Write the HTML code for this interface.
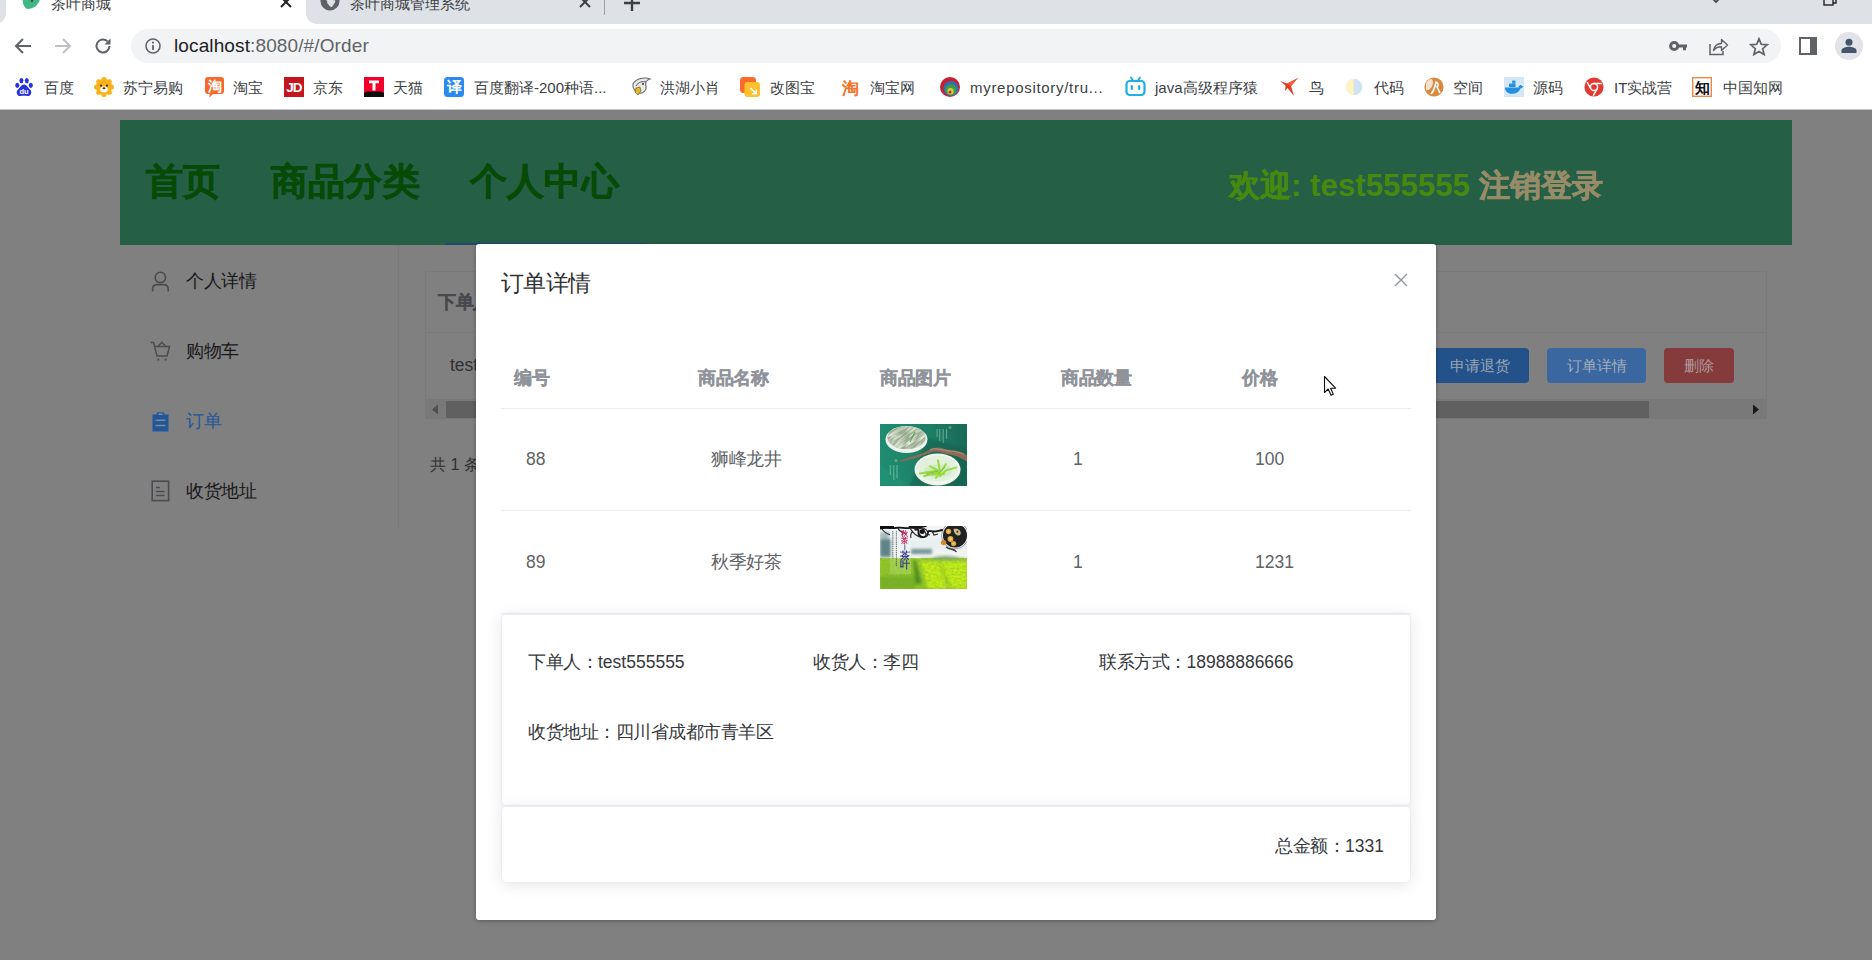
<!DOCTYPE html>
<html lang="zh">
<head>
<meta charset="utf-8">
<title>茶叶商城</title>
<style>
*{box-sizing:border-box;margin:0;padding:0}
html,body{width:1872px;height:960px;overflow:hidden;background:#808080;font-family:"Liberation Sans",sans-serif;}
#root{position:relative;width:1872px;height:960px;overflow:hidden;background:#808080}
.abs{position:absolute;white-space:nowrap}
.cj{letter-spacing:-.5px}
/* chrome */
#tabstrip{left:0;top:0;width:1872px;height:24px;background:#dee1e6}
#toolbar{left:0;top:24px;width:1872px;height:44px;background:#fff}
#bookbar{left:0;top:68px;width:1872px;height:42px;background:#fff;border-bottom:1px solid #c4c5c7}
#omni{left:131px;top:29px;width:1650px;height:34px;border-radius:17px;background:#f1f3f4}
.bm{font-size:15px;color:#3c4043;top:78px;line-height:20px}
/* page */
#hdr{left:120px;top:120px;width:1672px;height:125px;background:#245f46}
.nav{font-size:37px;font-weight:bold;color:#064a06;top:160px;line-height:44px;-webkit-text-stroke:.6px #064a06;letter-spacing:.2px}
.menu{font-size:17.5px;color:#181819;line-height:22px;letter-spacing:-.5px}
/* dialog */
#dlg{left:476px;top:244px;width:960px;height:676px;background:#fff;border-radius:3px;box-shadow:0 1px 4px rgba(0,0,0,.3)}
.th{font-size:17.5px;font-weight:bold;color:#909399;top:367px;line-height:22px;-webkit-text-stroke:.3px #909399;letter-spacing:-.4px}
.td{font-size:17.5px;color:#606266;line-height:22px}
.card{background:#fff;border:1px solid #ebeef5;border-radius:5px;box-shadow:0 2px 15px rgba(0,0,0,.1)}
.ct{font-size:17.5px;color:#36383c;line-height:22px}
</style>
</head>
<body>
<div id="root">
<!-- PAGE BACKGROUND (dimmed) -->
<div class="abs" id="hdr"></div>
<div class="abs" style="left:445px;top:242px;width:200px;height:1px;background:#235a55"></div><div class="abs" style="left:445px;top:243px;width:200px;height:2px;background:#214c68"></div>
<div class="abs nav" style="left:146px">首页</div>
<div class="abs nav" style="left:271px">商品分类</div>
<div class="abs nav" style="left:470px">个人中心</div>
<div class="abs" style="left:1229px;top:166px;font-size:31.25px;font-weight:bold;line-height:40px;color:#47890f"><span style="-webkit-text-stroke:.5px #47890f">欢迎</span>: test555555 <span style="color:#988c68;-webkit-text-stroke:.5px #988c68">注销登录</span></div>
<!-- sidebar -->
<div class="abs" style="left:398px;top:245px;width:1px;height:283px;background:#78797c"></div>
<svg class="abs" style="left:150px;top:270px" width="22" height="23" viewBox="0 0 22 23"><circle cx="10.4" cy="7.4" r="5.2" fill="none" stroke="#4a4b4f" stroke-width="1.6"/><path d="M2.6 21.5 V19 C2.6 16 5 14.6 7.5 14.6 H13.3 C15.8 14.6 18.2 16 18.2 19 V21.5" fill="none" stroke="#4a4b4f" stroke-width="1.6"/></svg>
<div class="abs menu" style="left:186px;top:270px">个人详情</div>
<svg class="abs" style="left:149px;top:340px" width="23" height="23" viewBox="0 0 23 23"><path d="M1.5 2.5 H4.5 L8 16 H18 L20.5 6.5 H5.8" fill="none" stroke="#4a4b4f" stroke-width="1.5" stroke-linejoin="round"/><path d="M9 6.5 L12.8 2.2 L16.8 6.5" fill="none" stroke="#4a4b4f" stroke-width="1.4"/><circle cx="9.3" cy="19.6" r="1.1" fill="#4a4b4f"/><circle cx="16.6" cy="19.6" r="1.1" fill="#4a4b4f"/></svg>
<div class="abs menu" style="left:186px;top:340px">购物车</div>
<svg class="abs" style="left:152px;top:411px" width="17" height="21" viewBox="0 0 17 21"><path d="M0.5 3.5 H4.8 V1.2 H12.2 V3.5 H16.5 V20.5 H0.5Z" fill="#21569a"/><path d="M3.5 9.2 H13.5 M3.5 14.6 H13.5" stroke="#7f8890" stroke-width="1.5"/><rect x="6.3" y="2.4" width="4.4" height="1.6" fill="#7f8890"/></svg>
<div class="abs menu" style="left:186px;top:410px;color:#24559a">订单</div>
<svg class="abs" style="left:151px;top:480px" width="19" height="22" viewBox="0 0 19 22"><rect x="1.2" y="1.2" width="16.4" height="19.4" fill="none" stroke="#4a4b4f" stroke-width="1.6"/><path d="M5 7.6 H9 M5 11.6 H13.6 M5 15.6 H13.6" stroke="#4a4b4f" stroke-width="1.5"/></svg>
<div class="abs menu" style="left:186px;top:480px">收货地址</div>
<!-- main table -->
<div class="abs" style="left:425px;top:271px;width:1342px;height:129px;border:1px solid #797a7d;border-bottom:none"></div>
<div class="abs" style="left:425px;top:332px;width:1342px;height:1px;background:#797a7d"></div>
<div class="abs" style="left:438px;top:291px;font-size:17.5px;font-weight:bold;line-height:22px;color:#48494d;-webkit-text-stroke:.3px #48494d;letter-spacing:-.4px">下单人</div>
<div class="abs" style="left:450px;top:354px;font-size:17.5px;line-height:22px;color:#303133">test555555</div>
<div class="abs" style="left:1431px;top:348px;width:98px;height:35px;border-radius:4px;background:#23528a"></div>
<div class="abs" style="left:1450px;top:356px;font-size:15px;line-height:19px;color:#9aa5b3">申请退货</div>
<div class="abs" style="left:1547px;top:348px;width:99px;height:35px;border-radius:4px;background:#3a67a0"></div>
<div class="abs" style="left:1567px;top:356px;font-size:15px;line-height:19px;color:#a3aebb">订单详情</div>
<div class="abs" style="left:1664px;top:348px;width:70px;height:35px;border-radius:4px;background:#853a3c"></div>
<div class="abs" style="left:1684px;top:356px;font-size:15px;line-height:19px;color:#b19a9b">删除</div>
<div class="abs" style="left:425px;top:399px;width:1342px;height:20px;background:#797979"></div>
<div class="abs" style="left:446px;top:401px;width:1203px;height:17px;background:#606060"></div>
<svg class="abs" style="left:430px;top:403px" width="10" height="13" viewBox="0 0 10 13"><path d="M8 1.5 V11.5 L2 6.5Z" fill="#505050"/></svg>
<svg class="abs" style="left:1751px;top:403px" width="10" height="13" viewBox="0 0 10 13"><path d="M2 1.5 V11.5 L8 6.5Z" fill="#1a1a1a"/></svg>
<div class="abs" style="left:430px;top:454px;font-size:16.25px;line-height:21px;color:#303133">共 1 条</div>
<!-- DIALOG -->
<div class="abs" id="dlg"></div>
<div class="abs" style="left:501px;top:269px;font-size:22.5px;line-height:30px;color:#303133;letter-spacing:-.7px">订单详情</div>
<svg class="abs" style="left:1393px;top:272px" width="16" height="16" viewBox="0 0 16 16"><path d="M2 2 L14 14 M14 2 L2 14" stroke="#909399" stroke-width="1.4" fill="none"/></svg>
<div class="abs th" style="left:514px">编号</div>
<div class="abs th" style="left:698px">商品名称</div>
<div class="abs th" style="left:880px">商品图片</div>
<div class="abs th" style="left:1061px">商品数量</div>
<div class="abs th" style="left:1242px">价格</div>
<div class="abs" style="left:501px;top:408px;width:910px;height:1px;background:#ebeef5"></div>
<div class="abs" style="left:501px;top:510px;width:910px;height:1px;background:#ebeef5"></div>
<div class="abs" style="left:501px;top:613px;width:910px;height:1px;background:#ebeef5"></div>
<div class="abs td" style="left:526px;top:448px">88</div>
<div class="abs td" style="left:711px;top:448px"><span class="cj">狮峰龙井</span></div>
<div class="abs td" style="left:1073px;top:448px">1</div>
<div class="abs td" style="left:1255px;top:448px">100</div>
<div class="abs td" style="left:526px;top:551px">89</div>
<div class="abs td" style="left:711px;top:551px"><span class="cj">秋季好茶</span></div>
<div class="abs td" style="left:1073px;top:551px">1</div>
<div class="abs td" style="left:1255px;top:551px">1231</div>
<svg class="abs" style="left:880px;top:424px" width="87" height="62" viewBox="0 0 87 62">
<defs><filter id="b1" x="-10%" y="-10%" width="120%" height="120%"><feGaussianBlur stdDeviation=".5"/></filter><filter id="b2" x="-10%" y="-10%" width="120%" height="120%"><feGaussianBlur stdDeviation=".9"/></filter>
<filter id="t1" x="0" y="0" width="100%" height="100%"><feTurbulence type="fractalNoise" baseFrequency=".09 .6" numOctaves="2" seed="7"/><feColorMatrix type="matrix" values="0 0 0 0 .28  0 0 0 0 .40  0 0 0 0 .26  0 2.2 0 0 -.75"/></filter>
<filter id="t2" x="0" y="0" width="100%" height="100%"><feTurbulence type="fractalNoise" baseFrequency=".09 .6" numOctaves="2" seed="11"/><feColorMatrix type="matrix" values="0 0 0 0 .90  0 0 0 0 .94  0 0 0 0 .86  2.2 0 0 0 -.8"/></filter>
<linearGradient id="g1" x1="0" y1="0" x2="1" y2="0"><stop offset="0" stop-color="#1f8d70"/><stop offset=".55" stop-color="#1d7f66"/><stop offset="1" stop-color="#196a56"/></linearGradient>
<clipPath id="c1"><rect width="87" height="62"/></clipPath>
<clipPath id="cp"><ellipse cx="26.5" cy="13.6" rx="19" ry="11.4"/></clipPath></defs>
<g clip-path="url(#c1)">
<rect width="87" height="62" fill="url(#g1)"/>
<path d="M46 14 L87 24 V62 H30 Z" fill="#16604d" opacity=".55" filter="url(#b2)"/>
<path d="M0 40 L30 62 H0Z" fill="#23977a" opacity=".5" filter="url(#b2)"/>
<g filter="url(#b1)">
<ellipse cx="26.5" cy="15.5" rx="21" ry="13.6" fill="#eef3ee"/>
<ellipse cx="26.5" cy="13.6" rx="19" ry="11.4" fill="#9fb095"/>
<g clip-path="url(#cp)"><g transform="rotate(-38 26 14)"><rect x="-5" y="-12" width="64" height="52" filter="url(#t1)"/><rect x="-5" y="-12" width="64" height="52" filter="url(#t2)"/></g></g>
<path d="M30 18 L35 8" stroke="#4f9a4a" stroke-width="1.4" opacity=".7"/>
<path d="M20.5 36.4 C30 33 38 31.4 44 28.6 C49 26 53 23.4 58 23.6 C64 24 68 26.6 74 26.6 C80 27 84 29.4 87 31.6 V37.6 C82 34.6 78 32 72 31 C65 30.4 60 27.4 55 27.6 C50 28 44 32 36 34 C30 35.6 25 36.8 21 37.6Z" fill="#906a57"/>
<path d="M50 25.6 C56 23.4 62 26.6 70 27 C76 27.4 80 28.6 84 30.4" stroke="#b89483" stroke-width=".9" fill="none"/>
<ellipse cx="57.5" cy="45.5" rx="23" ry="16" fill="#f0f6ee"/>
<ellipse cx="57.5" cy="44.4" rx="20.4" ry="13" fill="#e2f1dc"/>
<ellipse cx="58" cy="47" rx="14" ry="7" fill="#cfeabf" opacity=".8"/>
<path d="M40 49.4 L58 46.4 L50 42.4 M44 52 L60 48 L58 36.4 M56 54 L62 46 L66 40 M60 52 L66 46.4 L76 43.6 M52 50.6 L64 50" stroke="#9ad943" stroke-width="2" fill="none" stroke-linecap="round" stroke-linejoin="round"/>
<path d="M46 50 L58 47 M58 50 L65 43" stroke="#76bb2e" stroke-width=".9" fill="none"/>
</g>
<g fill="#a9d8bf" opacity=".5" filter="url(#b1)"><circle cx="70" cy="3.6" r="1.5" fill="#c9b46a"/><rect x="66" y="5" width="1.1" height="10"/><rect x="62.6" y="5" width="1.1" height="14"/><rect x="59.2" y="5" width="1.1" height="12"/><rect x="56.6" y="5" width="1" height="8"/>
<circle cx="16" cy="36.5" r="1.5" fill="#c9b46a"/><rect x="16.5" y="41" width="1.1" height="13"/><rect x="13.2" y="41" width="1.1" height="15"/><rect x="9.8" y="41" width="1.1" height="10"/></g>
</g></svg>
<svg class="abs" style="left:880px;top:526px" width="87" height="63" viewBox="0 0 87 63">
<defs><filter id="d1" x="-10%" y="-10%" width="120%" height="120%"><feGaussianBlur stdDeviation=".45"/></filter><filter id="d2" x="-20%" y="-20%" width="140%" height="140%"><feGaussianBlur stdDeviation="1.6"/></filter>
<filter id="tx" x="0" y="0" width="100%" height="100%"><feTurbulence type="fractalNoise" baseFrequency=".35 .5" numOctaves="2" seed="4"/><feColorMatrix type="matrix" values="0 0 0 0 .15  0 0 0 0 .38  0 0 0 0 .05  0 1.6 0 0 -.55"/></filter>
<linearGradient id="sk" x1="0" y1="0" x2="0" y2="1"><stop offset="0" stop-color="#f2f5f5"/><stop offset=".3" stop-color="#e9eeee"/><stop offset=".5" stop-color="#f4f7f4"/><stop offset=".52" stop-color="#a2d02a"/><stop offset="1" stop-color="#90c41e"/></linearGradient>
<clipPath id="c2"><rect width="87" height="63"/></clipPath></defs>
<g clip-path="url(#c2)">
<rect width="87" height="63" fill="url(#sk)"/>
<g filter="url(#d2)">
<path d="M0 13 H11 V31 H0Z" fill="#5f8388"/>
<path d="M0 6 H9 V13 H0Z" fill="#a9bcbe"/>
<path d="M31 23 H52 V28 H31Z" fill="#6f9295"/>
<path d="M50 33 C58 29 72 29 84 33Z" fill="#7f9c86"/>
<path d="M40 33 H87 V63 H48Z" fill="#c4ee12"/>
<path d="M0 33 H34 L40 63 H0Z" fill="#93c828"/>
<path d="M0 50 H36 V63 H0Z" fill="#7ab322"/>
<path d="M33 34 L36 34 L42 58 L35 58Z" fill="#4f8c1c"/>
<path d="M58 34 L60 34 L73 63 L67 63Z" fill="#a6d61c"/>
<path d="M40 32.5 H87 V35 H40Z" fill="#86b83a"/>
</g>
<rect x="0" y="32" width="87" height="31" filter="url(#tx)" opacity=".55"/>
<rect x="10" y="3" width="21" height="45" fill="#fff" opacity=".16"/>
<g filter="url(#d1)">
<path d="M0 1 C5 0 9 3 15 2 C21 .6 25 3 30 1.8 C35 .8 39 2.5 38.5 6 C38 10.5 43 12.5 46.5 10 C49.5 7.5 46 4 51 5.2 C55 6.2 58 4.6 63 4" stroke="#141414" stroke-width="1.9" fill="none"/>
<path d="M0 0 H14 V1.8 C9 3.4 4 2.4 0 3.6Z" fill="#101010"/>
<path d="M28 0 H47 C46 2 42 1.2 39 2.6 C35 3.4 31 2.6 28 0Z" fill="#181818"/>
<path d="M30 2 C32 6 36 10 42 11.8 M39 2.6 C43 1.6 47 3 47.6 6.2 M2 3 C4 6 7 8 10 8.6 M18 2 C19 5 21 6 24 6 M33 5 C31 7 30 9 31 12 M43 2 L46 8 L50 9 M52 5 L54 9 L58 8" stroke="#222" stroke-width="1.1" fill="none"/>
<circle cx="42.2" cy="5.6" r="2.5" fill="#191919"/><circle cx="35.8" cy="3.4" r="1.4" fill="#222"/><circle cx="46" cy="9.4" r="1.2" fill="#333"/>
<circle cx="75" cy="9.5" r="12" fill="#232323"/>
<circle cx="75" cy="9.5" r="13.4" fill="none" stroke="#555" stroke-width="1" opacity=".5"/>
<path d="M66 21 C70 24.5 74 22 76.5 26" stroke="#3a3a3a" stroke-width="1.3" fill="none"/>
<circle cx="68.5" cy="5.5" r="2.7" fill="#d9a23e"/><circle cx="70.5" cy="13" r="2.9" fill="#e2aa3c"/><circle cx="73.6" cy="17.6" r="2.6" fill="#d9a23e"/><circle cx="63.6" cy="16.6" r="2.7" fill="#c98f2e"/>
<circle cx="68.5" cy="5.5" r="1.3" fill="#f0cd78"/><circle cx="70.5" cy="13" r="1.4" fill="#f3d27e"/><circle cx="73.6" cy="17.6" r="1.2" fill="#f0cd78"/>
<path d="M73.6 3 C77.6 1.6 82 4.6 80.4 8.6 C78.6 11 73.6 8.4 73.6 3Z" fill="#cdbd8e"/>
<circle cx="77.4" cy="5.8" r="1" fill="#3a3326"/>
<text x="24.8" y="9.6" font-family="Liberation Sans" font-size="7.4" font-weight="bold" fill="#c3205c" text-anchor="middle">秋</text>
<text x="24.8" y="16.8" font-family="Liberation Sans" font-size="7.4" font-weight="bold" fill="#c3205c" text-anchor="middle">茶</text>
<rect x="24.3" y="18.4" width="1" height="6" fill="#5a5f9a"/>
<text x="24.8" y="33" font-family="Liberation Serif" font-size="9.6" font-weight="bold" fill="#3b3f8e" text-anchor="middle">茶</text>
<text x="24.8" y="42" font-family="Liberation Serif" font-size="9.6" font-weight="bold" fill="#3b3f8e" text-anchor="middle">叶</text>
<g fill="#4e5f60" opacity=".75"><path d="M16.4 5 V41 M12.8 5 V33" stroke="#4e5f60" stroke-width="1.2" stroke-dasharray="1.4 .7"/></g>
</g>
</g></svg>
<div class="abs card" style="left:501px;top:614px;width:910px;height:192px"></div>
<div class="abs ct" style="left:528px;top:651px"><span class="cj">下单人：</span>test555555</div>
<div class="abs ct" style="left:813px;top:651px"><span class="cj">收货人：李四</span></div>
<div class="abs ct" style="left:1099px;top:651px"><span class="cj">联系方式：</span>18988886666</div>
<div class="abs ct" style="left:528px;top:721px"><span class="cj">收货地址：四川省成都市青羊区</span></div>
<div class="abs card" style="left:501px;top:806px;width:910px;height:77px"></div>
<div class="abs ct" style="right:488px;top:835px"><span class="cj">总金额：</span>1331</div>
<!-- cursor -->
<svg class="abs" style="left:1323px;top:375px" width="14" height="22" viewBox="0 0 14 22"><path d="M1.5 1.5 V17.5 L5.2 14 L8 20.3 L10.3 19.3 L7.6 13.2 H12.6Z" fill="#fff" stroke="#111" stroke-width="1.1" stroke-linejoin="round"/></svg>
<!-- BROWSER CHROME -->
<div class="abs" id="tabstrip"></div>
<div class="abs" style="left:6px;top:-10px;width:300px;height:34px;background:#fff;border-radius:10px 10px 0 0"></div>
<div class="abs" style="left:-4px;top:14px;width:10px;height:10px;background:radial-gradient(circle at 0 0,#dee1e6 9.5px,#fff 10px)"></div>
<div class="abs" style="left:306px;top:14px;width:10px;height:10px;background:radial-gradient(circle at 100% 0,#dee1e6 9.5px,#fff 10px)"></div>
<svg class="abs" style="left:22px;top:-11px" width="20" height="20" viewBox="0 0 20 20"><path d="M1 6 C4 2 14 0 19 3 C19 12 15 20 5 20 C1 18 0 12 1 6Z" fill="#41b883"/><path d="M6 6 L10 14 L14 6 L12 6 L10 10.5 L8 6Z" fill="#35495e"/></svg>
<div class="abs" style="left:51px;top:-6px;font-size:15px;line-height:20px;color:#3c4043">茶叶商城</div>
<svg class="abs" style="left:279px;top:-5px" width="14" height="14" viewBox="0 0 14 14"><path d="M2 2 L12 12 M12 2 L2 12" stroke="#202124" stroke-width="2" fill="none"/></svg>
<svg class="abs" style="left:320px;top:-9.5px" width="20" height="20" viewBox="0 0 20 20"><circle cx="10" cy="10" r="9.5" fill="#5f6368"/><path d="M3 9 C6 8 8 10 7 12 C9 13 9 16 12 16 C13 13 16 12 15 9 C12 10 11 7 13 5 L9 3 C8 6 5 6 3 9Z" fill="#dee1e6"/></svg>
<div class="abs" style="left:350px;top:-6px;font-size:15px;line-height:20px;color:#3c4043">茶叶商城管理系统</div>
<svg class="abs" style="left:578px;top:-5px" width="14" height="14" viewBox="0 0 14 14"><path d="M2 2 L12 12 M12 2 L2 12" stroke="#3c4043" stroke-width="2" fill="none"/></svg>
<div class="abs" style="left:604px;top:0;width:1px;height:15px;background:#9aa0a6"></div>
<svg class="abs" style="left:623px;top:-6px" width="18" height="18" viewBox="0 0 18 18"><path d="M9 1 V17 M1 9 H17" stroke="#3c4043" stroke-width="2.4" fill="none"/></svg>
<svg class="abs" style="left:1710px;top:-4px" width="12" height="8" viewBox="0 0 12 8"><path d="M1 1 L6 6 L11 1" stroke="#3c4043" stroke-width="1.6" fill="none"/></svg>
<svg class="abs" style="left:1823px;top:-6px" width="14" height="12" viewBox="0 0 14 12"><rect x="1" y="2" width="9" height="9" fill="none" stroke="#202124" stroke-width="1.4"/><path d="M4 2 V0 H13 V9 H10" fill="none" stroke="#202124" stroke-width="1.4"/></svg>
<div class="abs" id="toolbar"></div>
<div class="abs" id="omni"></div>
<svg class="abs" style="left:13px;top:36px" width="20" height="20" viewBox="0 0 20 20"><path d="M18 10 H3.5 M10 3 L3 10 L10 17" stroke="#5f6368" stroke-width="2" fill="none"/></svg>
<svg class="abs" style="left:53px;top:36px" width="20" height="20" viewBox="0 0 20 20"><path d="M2 10 H16.5 M10 3 L17 10 L10 17" stroke="#bdc1c6" stroke-width="2" fill="none"/></svg>
<svg class="abs" style="left:93px;top:36px" width="20" height="20" viewBox="0 0 20 20"><path d="M16.5 10 A6.5 6.5 0 1 1 14.6 5.4" stroke="#5f6368" stroke-width="2" fill="none"/><path d="M17.5 2.5 V8.5 H11.5Z" fill="#5f6368"/></svg>
<svg class="abs" style="left:144px;top:37px" width="18" height="18" viewBox="0 0 18 18"><circle cx="9" cy="9" r="7" stroke="#5f6368" stroke-width="1.6" fill="none"/><path d="M9 8 V13" stroke="#5f6368" stroke-width="1.8"/><circle cx="9" cy="5.6" r="1.1" fill="#5f6368"/></svg>
<div class="abs" style="left:174px;top:34px;font-size:19px;line-height:24px;color:#202124;letter-spacing:0.12px">localhost<span style="color:#5f6368">:8080/#/Order</span></div>
<div class="abs" id="bookbar"></div>
<!-- toolbar right icons -->
<svg class="abs" style="left:1669px;top:37px" width="19" height="18" viewBox="0 0 19 18"><circle cx="5.2" cy="9" r="3.6" stroke="#5f6368" stroke-width="3" fill="none"/><path d="M9 9 H18 M15.5 9 V13.2" stroke="#5f6368" stroke-width="3" fill="none"/></svg>
<svg class="abs" style="left:1709px;top:37px" width="20" height="19" viewBox="0 0 20 19"><path d="M1 7 V17.5 H14 V14" stroke="#5f6368" stroke-width="1.5" fill="none"/><path d="M4.5 13.5 C5.5 8.5 9 6.5 12.5 6.5 V2.5 L18.5 8 L12.5 13.5 V9.8 C9 9.8 6.5 10.8 4.5 13.5Z" stroke="#5f6368" stroke-width="1.4" fill="none" stroke-linejoin="round"/></svg>
<svg class="abs" style="left:1749px;top:37px" width="20" height="19" viewBox="0 0 20 19"><path d="M10 1.8 L12.3 7.3 L18.2 7.8 L13.7 11.7 L15.1 17.5 L10 14.4 L4.9 17.5 L6.3 11.7 L1.8 7.8 L7.7 7.3Z" stroke="#5f6368" stroke-width="1.7" fill="none" stroke-linejoin="miter"/></svg>
<svg class="abs" style="left:1799px;top:37px" width="18" height="18" viewBox="0 0 18 18"><rect x="1" y="1" width="16" height="16" fill="none" stroke="#5f6368" stroke-width="2"/><rect x="11" y="1" width="6" height="16" fill="#5f6368"/></svg>
<div class="abs" style="left:1835px;top:32px;width:28px;height:28px;border-radius:14px;background:#e1e3e8"></div>
<svg class="abs" style="left:1840px;top:37px" width="18" height="18" viewBox="0 0 18 18"><circle cx="9" cy="5.3" r="3.5" fill="#44546a"/><path d="M1.5 16 V13.5 C1.5 11 6 9.8 9 9.8 C12 9.8 16.5 11 16.5 13.5 V16Z" fill="#44546a"/></svg>
<!-- bookmark favicons -->
<svg class="abs" style="left:14px;top:77px" width="20" height="20" viewBox="0 0 20 20"><g fill="#2932e1"><ellipse cx="3.3" cy="8.3" rx="2" ry="2.6"/><ellipse cx="7.4" cy="3.6" rx="2" ry="2.7"/><ellipse cx="12.8" cy="3.6" rx="2" ry="2.7"/><ellipse cx="16.8" cy="8.3" rx="2" ry="2.6"/><path d="M10 7.5 C13 7.5 14 11 16.5 13 C18.5 15.5 16.5 19.5 13.5 19 C11.5 18.6 8.5 18.6 6.5 19 C3.5 19.5 1.5 15.5 3.5 13 C6 11 7 7.5 10 7.5Z"/></g><text x="10" y="17.2" font-family="Liberation Sans" font-size="7.5" font-weight="bold" fill="#fff" text-anchor="middle">du</text></svg>
<svg class="abs" style="left:94px;top:77px" width="20" height="20" viewBox="0 0 20 20"><g fill="#f9b21a"><circle cx="10" cy="10" r="8"/><circle cx="10" cy="2.6" r="2.6"/><circle cx="15.2" cy="4.8" r="2.6"/><circle cx="17.4" cy="10" r="2.6"/><circle cx="15.2" cy="15.2" r="2.6"/><circle cx="10" cy="17.4" r="2.6"/><circle cx="4.8" cy="15.2" r="2.6"/><circle cx="2.6" cy="10" r="2.6"/><circle cx="4.8" cy="4.8" r="2.6"/></g><ellipse cx="10" cy="12.6" rx="3.8" ry="3" fill="#fff"/><circle cx="7" cy="8.6" r="1.1" fill="#4a2c0a"/><circle cx="13" cy="8.6" r="1.1" fill="#4a2c0a"/><ellipse cx="10" cy="11.3" rx="1.5" ry="1" fill="#4a2c0a"/></svg>
<svg class="abs" style="left:204px;top:76px" width="21" height="22" viewBox="0 0 21 22"><path d="M4 1 H17 Q20 1 20 4 V15 Q20 18 17 18 H9 L5.5 21.5 L5.5 18 H4 Q1 18 1 15 V4 Q1 1 4 1Z" fill="#f5692c"/><text x="10.5" y="14.6" font-family="Liberation Sans" font-size="14" font-weight="bold" fill="#fff" text-anchor="middle">淘</text></svg>
<svg class="abs" style="left:284px;top:77px" width="20" height="20" viewBox="0 0 20 20"><rect width="20" height="20" fill="#c4161f"/><text x="10" y="15.2" font-family="Liberation Sans" font-size="13.5" font-weight="bold" fill="#fff" text-anchor="middle" letter-spacing="-0.8">JD</text></svg>
<svg class="abs" style="left:364px;top:77px" width="20" height="20" viewBox="0 0 20 20"><rect width="20" height="20" fill="#f2002b"/><path d="M0 16 L3 14.5 H17 L20 16 V20 H0Z" fill="#0d0d0d"/><path d="M5 3.5 H15 V6.3 H11.5 V13.5 H8.5 V6.3 H5Z" fill="#fff"/></svg>
<svg class="abs" style="left:444px;top:77px" width="20" height="20" viewBox="0 0 20 20"><rect width="20" height="20" rx="3.5" fill="#2a8af0"/><text x="10" y="15.3" font-family="Liberation Sans" font-size="14.5" font-weight="bold" fill="#fff" text-anchor="middle">译</text></svg>
<svg class="abs" style="left:630px;top:76px" width="22" height="22" viewBox="0 0 22 22"><path d="M3 8 C6 2 15 1 20 3 C16 4 15 7 16 10 C17 14 13 18 9 17 C6 16 2 13 3 8Z" fill="#e9e9e9" stroke="#6b6b6b" stroke-width="1.1"/><path d="M6 10 C8 6 13 5 16 6" stroke="#555" stroke-width="1" fill="none"/><path d="M6 12 L10 11 L11 15 L8 19 L5 16Z" fill="#e8b72c" stroke="#6a5a20" stroke-width=".7"/><circle cx="13" cy="8" r="1" fill="#333"/></svg>
<svg class="abs" style="left:740px;top:77px" width="20" height="20" viewBox="0 0 20 20"><rect x="0" y="0" width="16" height="16" rx="3.5" fill="#fb6a2c"/><rect x="4.5" y="5" width="15.5" height="15" rx="3" fill="#fdc12e"/><path d="M10.5 11 L16 16.5 M16.3 12.5 V16.8 H12" stroke="#fff" stroke-width="1.5" fill="none"/></svg>
<svg class="abs" style="left:839px;top:76px" width="22" height="22" viewBox="0 0 22 22"><text x="11" y="17.5" font-family="Liberation Sans" font-size="17" font-weight="bold" fill="#f4732a" text-anchor="middle">淘</text></svg>
<svg class="abs" style="left:940px;top:77px" width="20" height="20" viewBox="0 0 20 20"><circle cx="10" cy="10" r="10" fill="#c8202f"/><circle cx="11" cy="11.5" r="7.6" fill="#2f6fb5"/><circle cx="11" cy="12.8" r="5.6" fill="#3c9e46"/><circle cx="10.5" cy="14.2" r="3.2" fill="#d9c83a"/><circle cx="10" cy="15" r="1.5" fill="#c8202f"/></svg>
<svg class="abs" style="left:1125px;top:76px" width="21" height="21" viewBox="0 0 21 21"><path d="M6 1.5 L8.5 5 M15 1.5 L12.5 5" stroke="#20aee5" stroke-width="2" stroke-linecap="round"/><rect x="1.5" y="5" width="18" height="14" rx="3.2" fill="#fff" stroke="#20aee5" stroke-width="2.2"/><path d="M6.8 10 V13 M14.2 10 V13" stroke="#20aee5" stroke-width="2.2" stroke-linecap="round"/></svg>
<svg class="abs" style="left:1279px;top:77px" width="21" height="20" viewBox="0 0 21 20"><path d="M1 4 L8 6.5 L19 1 L12 9 L15 19 L8.5 11 L6 14 L6.5 8.5Z" fill="#e03c24"/><path d="M8 6.5 L19 1 L12 9 Z" fill="#f0603a"/></svg>
<svg class="abs" style="left:1345px;top:78px" width="18" height="18" viewBox="0 0 18 18"><circle cx="9" cy="9" r="8.3" fill="#fdf3c4"/><path d="M9 .7 A8.3 8.3 0 0 1 9 17.3Z" fill="#cfe3f7"/><path d="M9 1 V17" stroke="#e9e2c6" stroke-width="1"/></svg>
<svg class="abs" style="left:1424px;top:77px" width="20" height="20" viewBox="0 0 20 20"><circle cx="10" cy="10" r="9.6" fill="#d98a3f"/><path d="M2 6 C5 1 9 1 9 5 C9 11 4 14 2 13Z" fill="#f2e3d0"/><path d="M11 5 C14 5 15 8 13 10 L16 16 M12 5 C11 10 10 14 7 17" stroke="#fff" stroke-width="1.6" fill="none"/></svg>
<svg class="abs" style="left:1504px;top:77px" width="20" height="20" viewBox="0 0 20 20"><rect width="20" height="20" fill="#d3e7f6"/><path d="M1 10.5 H14.5 C15 8.5 16 8 17 8 C17.3 9 18.6 9 19.4 9.6 C18.6 11 17.4 11.4 16.4 11.4 C15.2 15 12 16.8 8 16.8 C3.6 16.8 1 14 1 10.5Z" fill="#2390e0"/><rect x="5" y="6.6" width="6.5" height="3.4" fill="#2390e0"/><rect x="8.2" y="3.6" width="3.2" height="3" fill="#2390e0"/></svg>
<svg class="abs" style="left:1584px;top:77px" width="20" height="20" viewBox="0 0 20 20"><circle cx="10" cy="10" r="9.6" fill="#e23a30"/><circle cx="10" cy="10" r="3.6" fill="none" stroke="#fff" stroke-width="1.5"/><path d="M10 6.4 H17.8 M6.9 11.8 L3 5 M13.1 11.8 L9.2 18.6" stroke="#fff" stroke-width="1.5" fill="none"/></svg>
<svg class="abs" style="left:1692px;top:77px" width="20" height="20" viewBox="0 0 20 20"><rect x=".7" y=".7" width="18.6" height="18.6" fill="#fff" stroke="#e98a4a" stroke-width="1.4"/><text x="10" y="15.6" font-family="Liberation Serif" font-size="15" font-weight="bold" fill="#111" text-anchor="middle">知</text></svg>
<!-- bookmarks -->
<div class="abs bm" style="left:44px">百度</div>
<div class="abs bm" style="left:123px">苏宁易购</div>
<div class="abs bm" style="left:233px">淘宝</div>
<div class="abs bm" style="left:313px">京东</div>
<div class="abs bm" style="left:393px">天猫</div>
<div class="abs bm" style="left:474px">百度翻译-200种语...</div>
<div class="abs bm" style="left:660px">洪湖小肖</div>
<div class="abs bm" style="left:770px">改图宝</div>
<div class="abs bm" style="left:870px">淘宝网</div>
<div class="abs bm" style="left:970px;letter-spacing:.7px">myrepository/tru...</div>
<div class="abs bm" style="left:1155px">java高级程序猿</div>
<div class="abs bm" style="left:1309px">鸟</div>
<div class="abs bm" style="left:1374px">代码</div>
<div class="abs bm" style="left:1453px">空间</div>
<div class="abs bm" style="left:1533px">源码</div>
<div class="abs bm" style="left:1614px">IT实战营</div>
<div class="abs bm" style="left:1723px">中国知网</div>
</div>
</body>
</html>
